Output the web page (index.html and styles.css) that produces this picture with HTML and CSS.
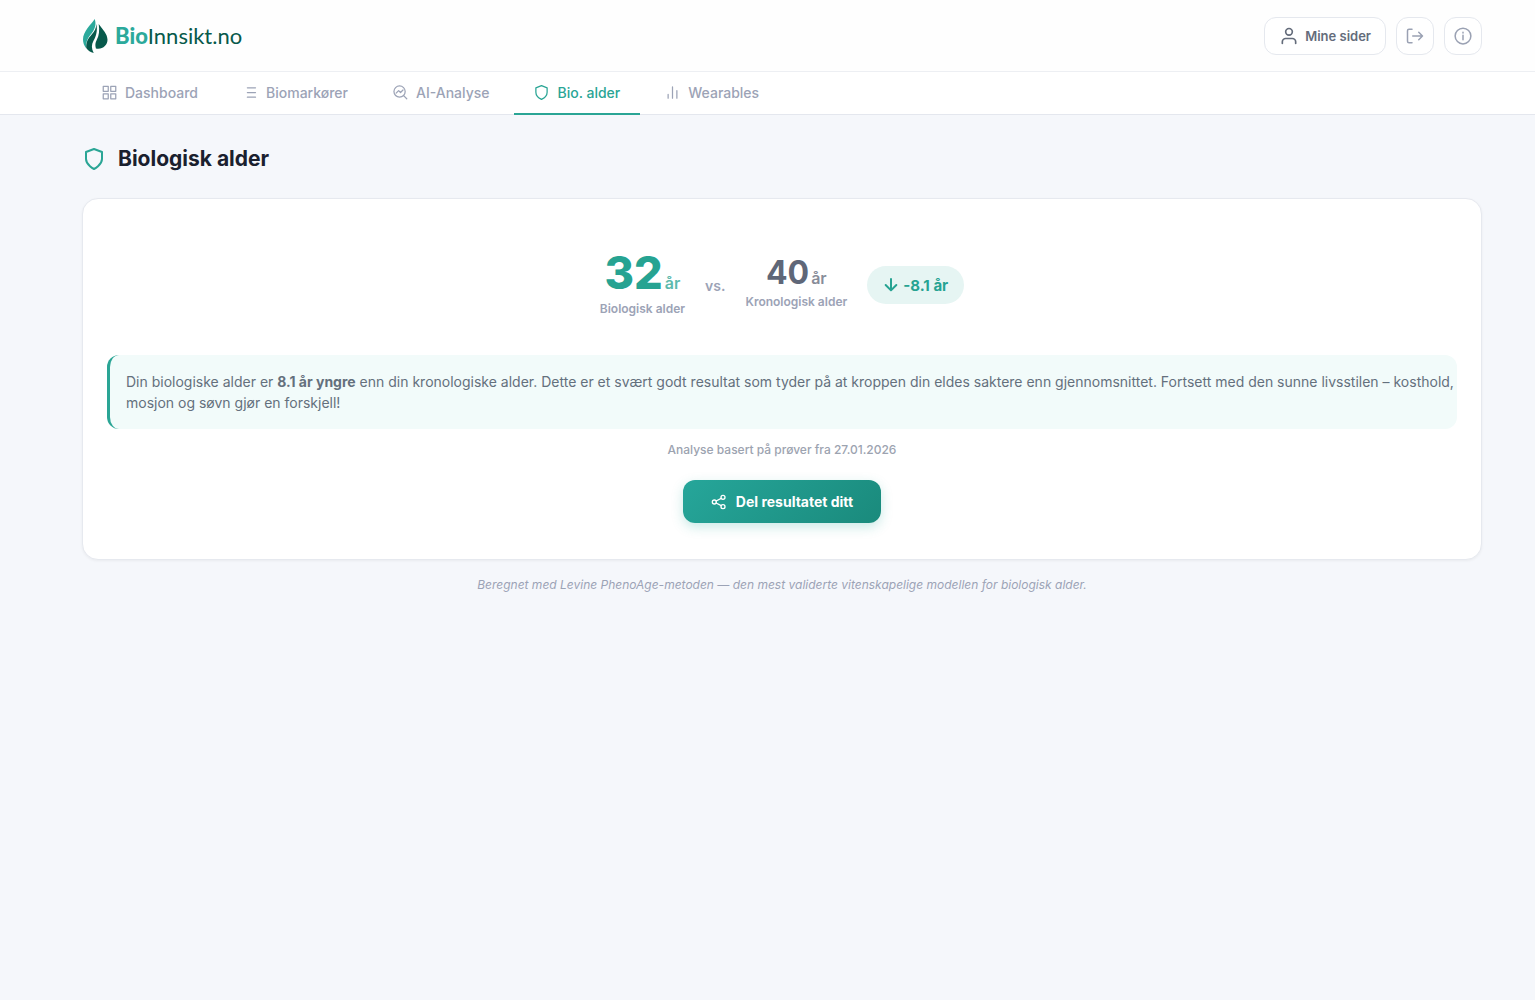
FILE: index.html
```html
<!DOCTYPE html>
<html lang="no">
<head>
    <meta charset="UTF-8">
    <meta name="viewport" content="width=device-width, initial-scale=1.0">
    <title>BioInnsikt.no - Biologisk alder</title>
    <link rel="stylesheet" href="styles.css">
</head>
<body>
    <header class="header">
        <a class="logo" href="#">
            <svg class="logo-mark" width="26" height="36" viewBox="0 0 26 36" aria-hidden="true">
                <path fill="#2ba99b" d="M12.700 1C9 6.500 1 13.500 1 21.500c0 3.200 1 6 3 8.500C4 23 6 19.500 9.500 15.500 12.800 11.500 14.600 6.500 12.700 1z"/>
                <path fill="#07594b" d="M14.200 6c.2 4-1.700 7.500-4.700 10.700C6 20.500 4 24 4.200 30c1.800 2.600 4.300 4.300 7.500 5-2.300-4.500-2.400-8-.2-12.200C14.300 18 15.800 12 14.200 6z"/>
                <path fill="#07594b" d="M16.700 6c1 6.500.4 11.500-1.900 15.800-1.600 3.200-1.800 5.300-.9 8.700 6.500 1.300 11.600-3 11.600-8.700 0-6-4.800-10-8.800-15.800z"/>
            </svg>
            <span class="logo-text"><b>Bio</b>Innsikt.no</span>
        </a>
        <div class="header-actions">
            <button class="btn-outline btn-profile" type="button">
                <svg class="icon" width="20" height="20" viewBox="0 0 24 24">
                    <path d="M20 21v-2a4 4 0 0 0-4-4H8a4 4 0 0 0-4 4v2"/>
                    <circle cx="12" cy="7" r="4"/>
                </svg>
                Mine sider
            </button>
            <button class="btn-outline btn-icon" type="button" aria-label="Logg ut">
                <svg class="icon" width="18" height="18" viewBox="0 0 24 24">
                    <path d="M8 3H4a2 2 0 0 0-2 2v14a2 2 0 0 0 2 2h4M9 12h13M17 7l5 5-5 5"/>
                </svg>
            </button>
            <button class="btn-outline btn-icon" type="button" aria-label="Informasjon">
                <svg class="icon" width="18" height="18" viewBox="0 0 24 24">
                    <circle cx="12" cy="12" r="10.500"/>
                    <path d="M12 11v6M12 7v1"/>
                </svg>
            </button>
        </div>
    </header>

    <nav class="tabs">
        <a class="tab" href="#">
            <svg class="icon" width="15" height="15" viewBox="0 0 24 24">
                <rect x="2" y="2" width="8" height="8"/>
                <rect x="14" y="2" width="8" height="8"/>
                <rect x="2" y="14" width="8" height="8"/>
                <rect x="14" y="14" width="8" height="8"/>
            </svg>
            Dashboard
        </a>
        <a class="tab" href="#">
            <svg class="icon" width="15" height="15" viewBox="0 0 24 24">
                <path d="M7 4.500h13M7 12h13M7 19.500h13"/>
            </svg>
            Biomarkører
        </a>
        <a class="tab" href="#">
            <svg class="icon" width="15" height="15" viewBox="0 0 24 24">
                <circle cx="10.500" cy="10.500" r="9"/>
                <path d="M17 17l5 5M5 13l4-4 3 3 4-4"/>
            </svg>
            AI-Analyse
        </a>
        <a class="tab active" href="#" aria-current="page">
            <svg class="icon" width="15" height="15" viewBox="0 0 24 24">
                <path d="M12 23s9-4.500 9-11.500V4.500L12 1 3 4.500v7C3 18.500 12 23 12 23z"/>
            </svg>
            Bio. alder
        </a>
        <a class="tab" href="#">
            <svg class="icon" width="15" height="15" viewBox="0 0 24 24">
                <path d="M19 21V9M12 21V3M5 21v-6"/>
            </svg>
            Wearables
        </a>
    </nav>

    <main class="main">
        <h1 class="page-title">
            <svg class="icon" width="24" height="24" viewBox="0 0 24 24">
                <path d="M12 22s8-4 8-10V5l-8-3-8 3v7c0 6 8 10 8 10z"/>
            </svg>
            Biologisk alder
        </h1>

        <section class="card">
            <div class="ages">
                <div class="age">
                    <div class="age-value bio">32<span class="unit">år</span></div>
                    <div class="age-label">Biologisk alder</div>
                </div>
                <div class="versus">vs.</div>
                <div class="age">
                    <div class="age-value chrono">40<span class="unit">år</span></div>
                    <div class="age-label">Kronologisk alder</div>
                </div>
                <div class="diff">
                    <svg class="icon" width="16" height="16" viewBox="0 0 24 24">
                        <path d="M12 3v17M4 12l8 8 8-8"/>
                    </svg>
                    -8.1 år
                </div>
            </div>

            <p class="summary">Din biologiske alder er <strong>8.1 år yngre</strong> enn din kronologiske alder. Dette er et svært godt resultat som tyder på at kroppen din eldes saktere enn gjennomsnittet. Fortsett med den sunne livsstilen – kosthold, mosjon og søvn gjør en forskjell!</p>
            <p class="sample-date">Analyse basert på prøver fra 27.01.2026</p>

            <button class="btn-share" type="button">
                <svg class="icon" width="16" height="16" viewBox="0 0 24 24">
                    <circle cx="18" cy="5" r="3"/>
                    <circle cx="5" cy="12" r="3"/>
                    <circle cx="18" cy="19" r="3"/>
                    <path d="M7.700 13.500l7.600 4M15.300 6.500l-7.600 4"/>
                </svg>
                Del resultatet ditt
            </button>
        </section>

        <p class="method">Beregnet med Levine PhenoAge-metoden — den mest validerte vitenskapelige modellen for biologisk alder.</p>
    </main>
</body>
</html>
```
FILE: styles.css
```css
* {
    box-sizing: border-box;
}

body {
    margin: 0;
    font-family: Inter, "Liberation Sans", sans-serif;
    font-size: 14px;
    background-color: #f5f7fb;
    color: #64707d;
}

h1, p {
    margin: 0;
}

button {
    font-family: inherit;
    cursor: pointer;
}

a {
    text-decoration: none;
}

.icon {
    flex: none;
    fill: none;
    stroke: currentColor;
    stroke-width: 2;
    stroke-linecap: round;
    stroke-linejoin: round;
}

.header,
.tabs,
.main {
    padding: 0 53px 0 82px;
}

/* Header */
.header {
    display: flex;
    align-items: center;
    justify-content: space-between;
    height: 72px;
    background-color: #fefefe;
    border-bottom: 1px solid #edeff3;
}

.logo {
    display: flex;
    align-items: center;
    gap: 7px;
    color: #07594b;
}

.logo-text {
    font-family: Lato, sans-serif;
    font-size: 22px;
    line-height: 28px;
}

.logo-text b {
    font-weight: 900;
    color: #2ba99b;
}

.header-actions {
    display: flex;
    gap: 10px;
}

.btn-outline {
    display: flex;
    align-items: center;
    justify-content: center;
    height: 38px;
    background-color: #fff;
    border: 1px solid #e5e8ee;
    border-radius: 12px;
    color: #9aa1b3;
}

.btn-profile {
    gap: 6px;
    padding: 0 14px;
    font-size: 13px;
    font-weight: 600;
    color: #646c7b;
}

.btn-icon {
    width: 38px;
    padding: 0;
}

/* Tabs */
.tabs {
    display: flex;
    gap: 5px;
    background-color: #fff;
    border-bottom: 1px solid #e4e7ee;
}

.tab {
    display: flex;
    align-items: center;
    gap: 8px;
    height: 43px;
    margin-bottom: -1px;
    padding: 0 20px;
    border-bottom: 2px solid transparent;
    font-weight: 500;
    color: #9ca3b6;
}

.tab.active {
    color: #2aa595;
    border-bottom-color: #2aa595;
}

/* Page */
.page-title {
    display: flex;
    align-items: center;
    gap: 12px;
    padding: 30px 0 25px;
    font-size: 21px;
    line-height: 28px;
    font-weight: 700;
    color: #1a202e;
}

.page-title .icon {
    color: #2aa595;
}

.card {
    display: flex;
    flex-direction: column;
    align-items: center;
    padding: 24px 24px 36px;
    background-color: #fff;
    border: 1px solid #e6e9ef;
    border-radius: 16px;
    box-shadow: 0 1px 3px rgba(0, 0, 0, 0.05);
}

.ages {
    display: flex;
    align-items: center;
    gap: 20px;
    padding: 28px 0 36px;
}

.age {
    text-align: center;
}

.age-value {
    font-weight: 800;
}

.age-value .unit {
    margin-left: 2px;
    font-size: 16px;
    line-height: 16px;
    font-weight: 600;
    opacity: 0.75;
}

.bio {
    font-size: 45px;
    line-height: 44px;
    color: #26a392;
}

.chrono {
    font-size: 32px;
    line-height: 30px;
    font-weight: 700;
    color: #5f6778;
}

.age-label {
    margin-top: 4px;
    font-size: 12px;
    line-height: 20px;
    font-weight: 600;
    color: #9ca3b6;
}

.versus {
    font-weight: 600;
    color: #9ca3b6;
}

.diff {
    display: flex;
    align-items: center;
    gap: 4px;
    height: 38px;
    padding: 0 16px;
    border-radius: 19px;
    font-size: 15px;
    font-weight: 700;
    color: #26a392;
    background-color: #e6f5f3;
}

.diff .icon {
    stroke-width: 3;
}

.summary {
    align-self: stretch;
    padding: 16px 3px 16px 16px;
    line-height: 21px;
    border-left: 3px solid #2aa595;
    border-radius: 12px;
    background-color: #f2fbfa;
}

.sample-date {
    margin-top: 12px;
    font-size: 12px;
    line-height: 18px;
    font-weight: 500;
    color: #9ca3b0;
}

.btn-share {
    display: flex;
    align-items: center;
    gap: 9px;
    height: 43px;
    margin-top: 21px;
    padding: 0 28px;
    border: none;
    border-radius: 12px;
    font-size: 14px;
    font-weight: 700;
    color: #fff;
    background: linear-gradient(135deg, #26a69a, #1a8a7c);
    box-shadow: 0 4px 12px rgba(38, 166, 154, 0.25);
}

.method {
    margin-top: 16px;
    text-align: center;
    font-size: 12px;
    line-height: 18px;
    font-style: italic;
    color: #9ca3b6;
}
```
